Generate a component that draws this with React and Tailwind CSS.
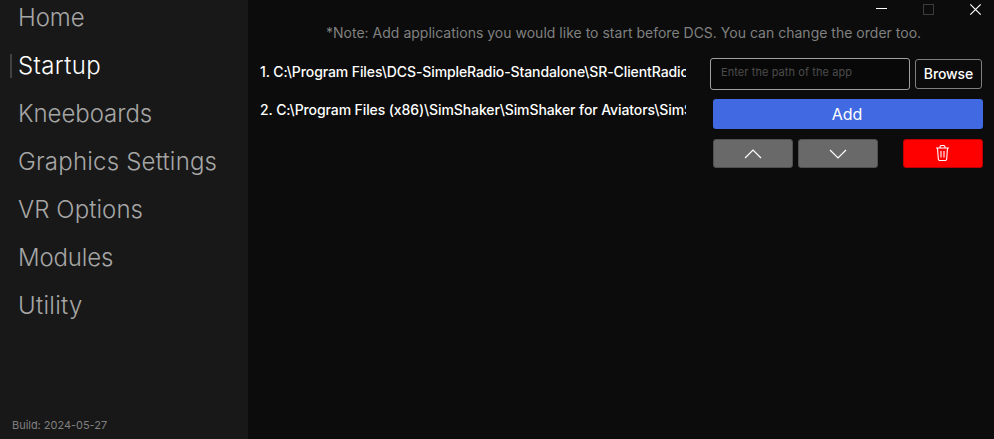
const navItems = [
  { label: 'Home', tracking: 'tracking-[-0.1px]' },
  { label: 'Startup', active: true, tracking: 'tracking-[0.4px]' },
  { label: 'Kneeboards', tracking: 'tracking-[-0.05px]' },
  { label: 'Graphics Settings', tracking: 'tracking-[0.2px]' },
  { label: 'VR Options', tracking: 'tracking-[0.08px]' },
  { label: 'Modules', tracking: 'tracking-[-0.15px]' },
  { label: 'Utility', tracking: 'tracking-[0.3px]' },
];

const apps = [
  '1. C:\\Program Files\\DCS-SimpleRadio-Standalone\\SR-ClientRadio',
  '2. C:\\Program Files (x86)\\SimShaker\\SimShaker for Aviators\\SimS',
];

function Sidebar() {
  return (
    <aside className="flex w-[248px] shrink-0 flex-col justify-between bg-[#181818]">
      <nav className="-mt-1.5 flex flex-col">
        {navItems.map((item) => (
          <a key={item.label} className="flex h-12 items-center pl-2.5">
            <span className={item.active ? 'h-6 w-0.5 bg-[#424242]' : 'h-6 w-0.5'} />
            <span
              className={`ml-1.5 whitespace-nowrap text-2xl font-light ${item.tracking} ${
                item.active ? 'text-white' : 'text-[#a6a6a6]'
              }`}
            >
              {item.label}
            </span>
          </a>
        ))}
      </nav>
      <p className="pb-1.5 pl-3 text-[11px] leading-4 tracking-[-0.03px] text-[#808080]">Build: 2024-05-27</p>
    </aside>
  );
}

function WindowControls() {
  return (
    <svg className="absolute top-0 right-0" width="130" height="20" fill="none">
      <path d="M12 8.5h11" stroke="#fff" />
      <rect x="59.5" y="4.5" width="10" height="10" stroke="#3c3c3c" />
      <path d="M106.3 4.3l10.4 10.4M116.7 4.3l-10.4 10.4" stroke="#fff" strokeWidth="1.2" />
    </svg>
  );
}

function Controls() {
  return (
    <section className="w-[273px] shrink-0">
      <div className="flex items-center gap-[5px]">
        <input
          className="h-8 w-[200px] rounded-[3px] border border-[#a0a0a0] bg-[#080808] px-2.5 pb-1 text-[11px] tracking-[0.08px] text-white outline-none placeholder:text-[#4c4c4c]"
          placeholder="Enter the path of the app"
        />
        <button className="h-[30px] w-[67px] rounded-[3px] border border-[#808080] bg-[#0b0b0b] text-sm font-medium tracking-[-0.1px] text-white">
          Browse
        </button>
      </div>
      <div className="pt-[9px] pl-[3px]">
        <button className="h-[30px] w-full rounded-[3px] bg-[#4169e1] pr-0.5 text-base text-white">Add</button>
        <div className="flex pt-2.5">
          <button className="flex h-[29px] w-20 items-center justify-center rounded-[3px] border border-[#505050] bg-[#696969]">
            <svg width="18" height="12" fill="none" stroke="#fff" strokeWidth="1.2">
              <path d="M1 10l8-8 8 8" />
            </svg>
          </button>
          <button className="ml-[5px] flex h-[29px] w-20 items-center justify-center rounded-[3px] border border-[#505050] bg-[#696969]">
            <svg width="18" height="12" fill="none" stroke="#fff" strokeWidth="1.2">
              <path d="M1 2l8 8 8-8" />
            </svg>
          </button>
          <button className="ml-[25px] flex h-[29px] w-20 items-center justify-center rounded-[3px] border border-[#c00000] bg-[#ff0000] pr-px pb-px">
            <svg width="13" height="16" fill="none" stroke="#fff" strokeWidth="1.1">
              <path d="M0 3h13M4 3V2Q4 .5 5.500 .5h2Q9 .5 9 2v1M1.500 3l.8 11q.1 1.500 1.500 1.500h5.400q1.400 0 1.500-1.500L11.500 3M5 6v6.500M8 6v6.500" />
            </svg>
          </button>
        </div>
      </div>
    </section>
  );
}

export default function App() {
  return (
    <div className="flex h-[439px] w-[994px] overflow-hidden bg-[#0b0c0b] font-['Inter',sans-serif]">
      <Sidebar />
      <main className="relative flex min-w-0 flex-1 flex-col">
        <WindowControls />
        <p className="mt-[23px] ml-[78px] whitespace-nowrap text-sm leading-5 tracking-[0.01px] text-[#808080]">
          *Note: Add applications you would like to start before DCS. You can change the order too.
        </p>
        <div className="mt-[15px] flex pl-3">
          <ul className="mr-6 w-[426px] shrink-0 text-sm font-medium tracking-[-0.1px] text-white">
            {apps.map((app) => (
              <li key={app} className="mb-2.5 h-7 overflow-hidden leading-7 whitespace-nowrap">
                {app}
              </li>
            ))}
          </ul>
          <Controls />
        </div>
      </main>
    </div>
  );
}
